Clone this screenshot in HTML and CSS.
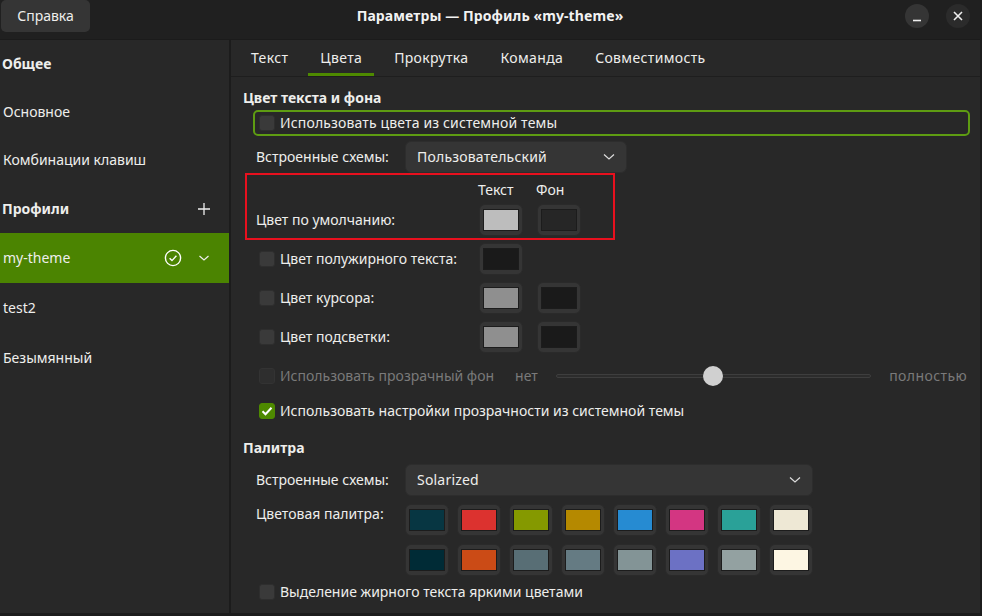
FILE: index.html
```html
<!DOCTYPE html>
<html lang="ru">
<head>
<meta charset="utf-8">
<title>Параметры</title>
<link rel="stylesheet" href="styles.css">
</head>
<body>
<div class="window">
  <header class="titlebar">
    <div class="tb-left"><button class="help">Справка</button></div>
    <div class="title">Параметры — Профиль «my-theme»</div>
    <div class="wm">
      <span class="wm-btn min"><svg width="24" height="24" viewBox="0 0 24 24"><path d="M8 16.5h8" stroke="#eee" stroke-width="1.6"/></svg></span>
      <span class="wm-btn close"><svg width="24" height="24" viewBox="0 0 24 24"><path d="M8 8l8 8M16 8l-8 8" stroke="#eee" stroke-width="1.6"/></svg></span>
    </div>
  </header>
  <div class="body">
    <aside class="sidebar">
      <div class="sb-head r1">Общее</div>
      <div class="sb-item r2">Основное</div>
      <div class="sb-item r3">Комбинации клавиш</div>
      <div class="sb-head r4"><span>Профили</span><svg class="plus" width="14" height="14" viewBox="0 0 14 14"><path d="M7 1v12M1 7h12" stroke="#eee" stroke-width="1.3"/></svg></div>
      <div class="sb-item sel">
        <span>my-theme</span>
        <span class="sel-icons">
          <svg width="18" height="18" viewBox="0 0 18 18"><circle cx="9" cy="9" r="7.6" fill="none" stroke="#fff" stroke-width="1.4"/><path d="M5.6 9.2l2.4 2.4 4.4-4.8" fill="none" stroke="#fff" stroke-width="1.4"/></svg>
          <svg class="chev" width="12" height="8" viewBox="0 0 12 8"><path d="M1.5 2l4.5 4 4.5-4" fill="none" stroke="#eee" stroke-width="1.2"/></svg>
        </span>
      </div>
      <div class="sb-item">test2</div>
      <div class="sb-item">Безымянный</div>
    </aside>
    <main class="main">
      <nav class="tabs">
        <span class="tab">Текст</span>
        <span class="tab active">Цвета</span>
        <span class="tab">Прокрутка</span>
        <span class="tab">Команда</span>
        <span class="tab">Совместимость</span>
      </nav>
      <div class="content">
        <div class="sec-title first">Цвет текста и фона</div>
        <div class="check-row focused"><span class="cb"></span>Использовать цвета из системной темы</div>
        <div class="combo-row">
          <span class="lbl">Встроенные схемы:</span>
          <div class="combo short"><span>Пользовательский</span><svg width="12" height="8" viewBox="0 0 12 8"><path d="M1 1.5l5 4.5 5-4.5" fill="none" stroke="#ddd" stroke-width="1.2"/></svg></div>
        </div>
        <div class="redbox">
          <div class="rrow head"><span class="rlabel"></span><span class="colhead">Текст</span><span class="colhead">Фон</span></div>
          <div class="rrow"><span class="rlabel">Цвет по умолчанию:</span><span class="cbtn"><i style="background:#bdbdbd"></i></span><span class="cbtn"><i style="background:#262626"></i></span></div>
        </div>
        <div class="crow bold"><span class="clabel"><span class="cb"></span>Цвет полужирного текста:</span><span class="cbtn"><i style="background:#1a1a1a"></i></span></div>
        <div class="crow"><span class="clabel"><span class="cb"></span>Цвет курсора:</span><span class="cbtn"><i style="background:#8f8f8f"></i></span><span class="cbtn"><i style="background:#1a1a1a"></i></span></div>
        <div class="crow"><span class="clabel"><span class="cb"></span>Цвет подсветки:</span><span class="cbtn"><i style="background:#8f8f8f"></i></span><span class="cbtn"><i style="background:#1a1a1a"></i></span></div>
        <div class="trans-row">
          <span class="tlabel dis"><span class="cb dis"></span>Использовать прозрачный фон</span>
          <span class="dis no">нет</span>
          <div class="slider"><div class="track"></div><div class="knob"></div></div>
          <span class="dis full">полностью</span>
        </div>
        <div class="sys-row"><span class="cb on"><svg width="16" height="16" viewBox="0 0 16 16"><path d="M3.5 8.2l3 3 6-6.4" fill="none" stroke="#fff" stroke-width="2"/></svg></span>Использовать настройки прозрачности из системной темы</div>
        <div class="sec-title pal">Палитра</div>
        <div class="combo-row second">
          <span class="lbl">Встроенные схемы:</span>
          <div class="combo long"><span>Solarized</span><svg width="12" height="8" viewBox="0 0 12 8"><path d="M1 1.5l5 4.5 5-4.5" fill="none" stroke="#ddd" stroke-width="1.2"/></svg></div>
        </div>
        <div class="pal-row">
          <span class="lbl pal-lbl">Цветовая палитра:</span>
          <div class="swatches">
            <span class="cbtn"><i style="background:#073642"></i></span>
            <span class="cbtn"><i style="background:#dc322f"></i></span>
            <span class="cbtn"><i style="background:#859900"></i></span>
            <span class="cbtn"><i style="background:#b58900"></i></span>
            <span class="cbtn"><i style="background:#268bd2"></i></span>
            <span class="cbtn"><i style="background:#d33682"></i></span>
            <span class="cbtn"><i style="background:#2aa198"></i></span>
            <span class="cbtn"><i style="background:#eee8d5"></i></span>
            <span class="cbtn"><i style="background:#002b36"></i></span>
            <span class="cbtn"><i style="background:#cb4b16"></i></span>
            <span class="cbtn"><i style="background:#586e75"></i></span>
            <span class="cbtn"><i style="background:#657b83"></i></span>
            <span class="cbtn"><i style="background:#839496"></i></span>
            <span class="cbtn"><i style="background:#6c71c4"></i></span>
            <span class="cbtn"><i style="background:#93a1a1"></i></span>
            <span class="cbtn"><i style="background:#fdf6e3"></i></span>
          </div>
        </div>
        <div class="last-row"><span class="cb"></span>Выделение жирного текста яркими цветами</div>
      </div>
    </main>
  </div>
</div>
</body>
</html>
```
FILE: styles.css
```css
* { box-sizing: border-box; margin: 0; padding: 0; }
html, body { width: 982px; height: 616px; overflow: hidden; background: #1c1c1c; }
body { font-family: "Noto Sans", "Open Sans", sans-serif; font-size: 14px; color: #eeeeec; line-height: 20px; }

.window { width: 980px; height: 613px; display: flex; flex-direction: column; background: #282828; }

.titlebar { height: 40px; flex: none; background: #202020; display: grid; grid-template-columns: 1fr auto 1fr; align-items: start; border-bottom: 1px solid #1b1b1b; }
.help { margin-left: 1px; width: 89px; height: 32px; border: none; border-radius: 5px; background: #353535; color: #eeeeec; font: inherit; font-size: 14px; }
.title { line-height: 32px; font-weight: bold; font-size: 14px; color: #f2f2f2; letter-spacing: 0.1px; }
.wm { justify-self: end; display: flex; gap: 17px; margin-top: 4px; margin-right: 10px; }
.wm-btn { width: 24px; height: 24px; border-radius: 50%; display: block; }
.wm-btn svg { display: block; }
.wm-btn.min { background: #353535; }
.wm-btn.close { background: #2b2b2b; }

.body { flex: 1; display: flex; min-height: 0; }

.sidebar { width: 231px; flex: none; border-right: 2px solid #1c1c1c; background: #282828; }
.sb-head, .sb-item { display: flex; align-items: center; padding-left: 3px; }
.sb-head { font-weight: bold; padding-left: 2px; }
.sb-item { height: 50px; }
.r1 { height: 48px; }
.sb-item.r2 { height: 47px; }
.sb-item.r3 { height: 50px; }
.r4 { height: 48px; justify-content: space-between; padding-right: 18px; }
.sb-item.sel { background: #4b8401; justify-content: space-between; padding-right: 19px; }
.sel-icons { display: flex; align-items: center; gap: 16px; }
.sel-icons svg { display: block; }

.main { flex: 1; display: flex; flex-direction: column; min-width: 0; }
.tabs { height: 37px; flex: none; display: flex; padding-left: 4px; border-bottom: 1px solid #1e1e1e; }
.tab { margin: 0 4px; padding: 0 12px; display: flex; align-items: center; border-bottom: 3px solid transparent; padding-top: 3px; color: #eeeeec; letter-spacing: 0.35px; }
.tab.active { border-bottom-color: #4e8a00; }

.content { padding: 0 13px 0 12px; }
.sec-title { font-weight: bold; height: 20px; }
.sec-title.first { margin-top: 11px; }
.sec-title.pal { margin-top: 17px; }

.cb { width: 16px; height: 16px; flex: none; border-radius: 3px; background: #3a3a3a; border: 1px solid #2e2e2e; display: inline-block; margin-right: 5px; }
.cb.dis { background: #2e2e2e; border-color: #333; }
.cb.on { background: #4e8a00; border-color: #4e8a00; }
.cb svg { display: block; margin: -1px; }

.check-row { display: flex; align-items: center; letter-spacing: 0.15px; }
.focused { margin-top: 2px; margin-left: 10px; margin-right: -3px; height: 26px; border: 2px solid #5e9c12; border-radius: 5px; padding-left: 4px; }

.combo-row { display: flex; align-items: center; margin-top: 5px; padding-left: 13px; }
.combo-row.second { margin-top: 6px; }
.combo-row .lbl { width: 149px; flex: none; }
.combo { height: 32px; border-radius: 6px; background: #353535; border: 1px solid #2d2d2d; display: flex; align-items: center; justify-content: space-between; padding: 0 11px 0 11px; letter-spacing: 0.2px; }
.combo svg { display: block; }
.combo.short { width: 222px; }
.combo.long { width: 408px; }

.redbox { margin-left: 2px; width: 370px; height: 67px; border: 2px solid #e8101e; padding: 6px 0 0 9px; }
.rrow { display: flex; align-items: center; }
.rrow.head { height: 18px; line-height: 18px; margin-bottom: 5px; }
.rlabel { width: 223px; flex: none; }
.colhead { width: 58px; flex: none; margin-left: -1px; margin-right: 1px; }

.cbtn { width: 44px; height: 32px; flex: none; border-radius: 6px; background: #353535; border: 1px solid #2a2a2a; padding: 4px 3px; display: block; }
.cbtn i { display: block; width: 100%; height: 100%; border: 1px solid #1c1c1c; }
.rrow .cbtn + .cbtn, .crow .cbtn + .cbtn { margin-left: 14px; }

.crow { display: flex; align-items: center; padding-left: 16px; margin-top: 7px; }
.crow.bold { margin-top: 3px; }
.clabel { width: 220px; flex: none; display: flex; align-items: center; }

.trans-row { display: flex; align-items: center; padding-left: 16px; margin-top: 13px; height: 20px; }
.tlabel { display: flex; align-items: center; flex: none; }
.dis { color: #7a7a7a; }
.no { margin-left: 21px; flex: none; }
.full { flex: none; letter-spacing: 0.4px; }
.slider { flex: 1; position: relative; height: 20px; margin: 0 18px 0 18px; }
.track { position: absolute; left: 0; right: 0; top: 8px; height: 4px; border-radius: 2px; background: #2c2c2c; border: 1px solid #3e3e3e; }
.knob { position: absolute; left: 147px; top: 0; width: 20px; height: 20px; border-radius: 50%; background: #d0d0d0; }

.sys-row { display: flex; align-items: center; padding-left: 16px; margin-top: 15px; height: 20px; }

.pal-row { display: flex; align-items: flex-start; padding-left: 13px; margin-top: 8px; }
.pal-lbl { width: 149px; flex: none; }
.swatches { display: grid; grid-template-columns: repeat(8, 44px); gap: 8px; }

.last-row { display: flex; align-items: center; padding-left: 16px; margin-top: 6px; height: 20px; }
```
